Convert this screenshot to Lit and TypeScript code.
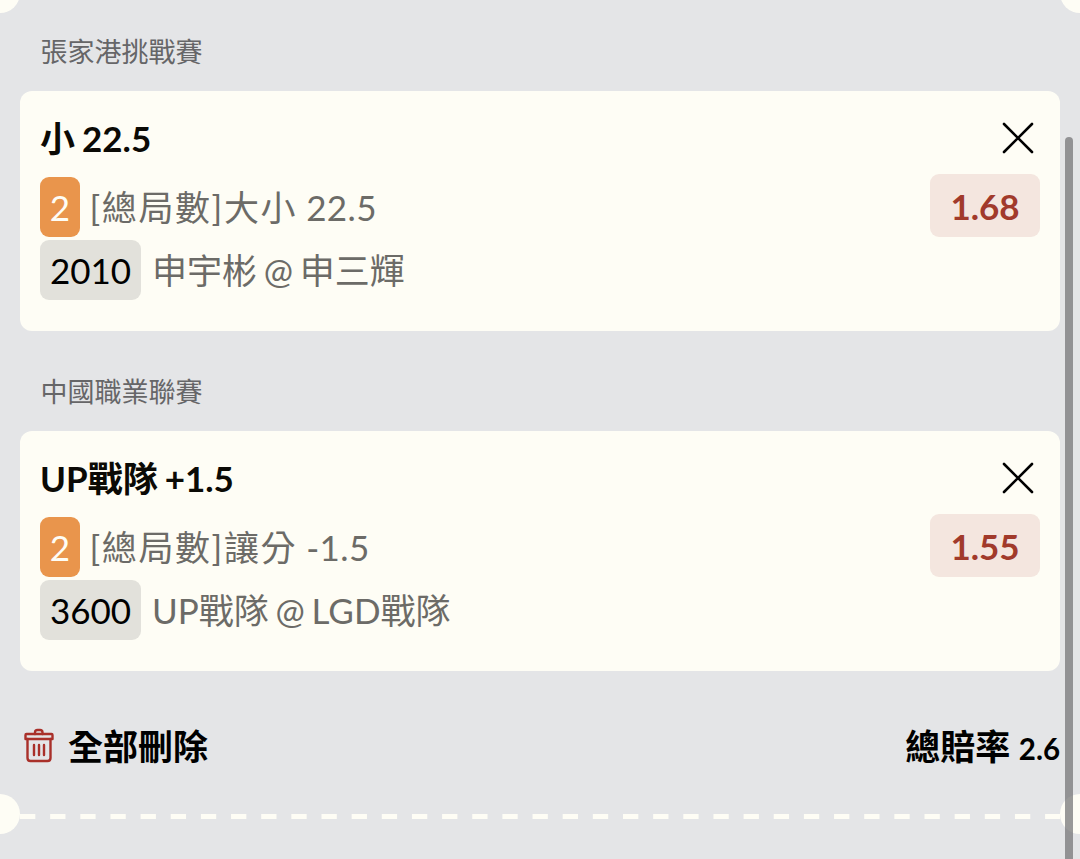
import { LitElement, html, svg, css } from 'lit';
import { customElement, property } from 'lit/decorators.js';

interface Bet {
  league: string;
  pick: string;
  count: number;
  market: string;
  line: string;
  code: string;
  match: string;
  odds: string;
}

const BETS: Bet[] = [
  {
    league: '張家港挑戰賽',
    pick: '小 22.5',
    count: 2,
    market: '[總局數]大小',
    line: '22.5',
    code: '2010',
    match: '申宇彬 @ 申三輝',
    odds: '1.68',
  },
  {
    league: '中國職業聯賽',
    pick: 'UP戰隊 +1.5',
    count: 2,
    market: '[總局數]讓分',
    line: '-1.5',
    code: '3600',
    match: 'UP戰隊 @ LGD戰隊',
    odds: '1.55',
  },
];

const closeIcon = svg`<path d="M3 3 31 31M31 3 3 31" fill="none" stroke="#000" stroke-width="2.6" stroke-linecap="round" />`;

const trashIcon = svg`
  <g fill="none" stroke="#a9302a" stroke-width="2.4" stroke-linejoin="round" stroke-linecap="round">
    <path d="M11 6V4.500Q11 2 13.500 2H16Q18.500 2 18.500 4.500V6" />
    <path d="M2.500 6H27.500Q28.500 6 28.500 7V11H1.500V7Q1.500 6 2.500 6Z" />
    <path d="M3.500 11V30Q3.500 33 6.500 33H23.500Q26.500 33 26.500 30V11" />
    <path d="M10 17V27M15 17V27M20 17V27" />
  </g>
`;

/** One selection: league name above a card with pick, market, match and odds. */
@customElement('bet-card')
export class BetCard extends LitElement {
  static styles = css`
    :host {
      display: block;
      height: 340px;
    }
    * {
      box-sizing: border-box;
    }
    .league {
      height: 91px;
      padding: 0 20.5px;
      line-height: 103px;
      font-size: 27px;
      color: #666668;
    }
    .card {
      display: flex;
      justify-content: space-between;
      height: 239.5px;
      padding: 18px 20px 0;
      border-radius: 12px;
      background: #fefdf5;
    }
    .info {
      display: flex;
      flex-direction: column;
    }
    .pick {
      height: 68.4px;
      line-height: 58px;
      font-weight: 700;
      word-spacing: -1.5px;
      color: #0b0a05;
    }
    .row {
      display: flex;
      align-items: center;
      height: 60px;
      margin-bottom: 3px;
      line-height: 60px;
      color: #6c6b67;
      white-space: pre;
    }
    .tag {
      height: 60px;
      margin-right: 11px;
      border-radius: 9px;
      text-align: center;
    }
    .count {
      width: 40px;
      margin-right: 9.5px;
      background: #e9954c;
      color: #fefdf5;
    }
    .code {
      width: 101px;
      background: #e2e1db;
      color: #000;
    }
    .market {
      margin-right: 9px;
      letter-spacing: 1.6px;
    }
    .line {
      letter-spacing: 0.4px;
    }
    .match {
      word-spacing: -2.2px;
    }
    .side {
      display: flex;
      flex-direction: column;
      align-items: flex-end;
    }
    .close {
      display: block;
      width: 34px;
      height: 34px;
      margin: 12px 5px 19px 0;
    }
    .odds {
      width: 110px;
      height: 63px;
      border-radius: 9px;
      background: #f4e6df;
      color: #a13a2b;
      font-weight: 700;
      line-height: 64px;
      text-align: center;
    }
  `;

  @property({ attribute: false }) bet!: Bet;

  render() {
    const { league, pick, count, market, line, code, match, odds } = this.bet;
    return html`
      <div class="league">${league}</div>
      <div class="card">
        <div class="info">
          <div class="pick">${pick}</div>
          <div class="row"><span class="tag count">${count}</span><span class="market">${market}</span><span class="line">${line}</span></div>
          <div class="row"><span class="tag code">${code}</span><span class="match">${match}</span></div>
        </div>
        <div class="side">
          <svg class="close" viewBox="0 0 34 34">${closeIcon}</svg>
          <div class="odds">${odds}</div>
        </div>
      </div>
    `;
  }
}

@customElement('app-root')
export class AppRoot extends LitElement {
  static styles = css`
    :host {
      display: block;
      position: relative;
      box-sizing: border-box;
      width: 1080px;
      height: 859px;
      padding: 0 20px;
      overflow: hidden;
      background: #e4e5e7;
      font-family: Lato, 'Noto Sans CJK TC', sans-serif;
      font-size: 35px;
      color: #000;
    }
    .footer {
      display: flex;
      align-items: center;
      height: 134px;
      font-weight: 700;
    }
    .trash {
      width: 30px;
      height: 35px;
      margin: 0 14px 3px 4px;
    }
    .clear {
      line-height: 60px;
      padding-bottom: 2px;
    }
    .total {
      margin-left: auto;
      line-height: 60px;
      padding-top: 1px;
    }
    .value {
      font-size: 29.5px;
    }
    .divider {
      display: block;
      width: 1040px;
      height: 5px;
    }
    /* ticket notches cut into both edges */
    .notch {
      position: absolute;
      width: 40px;
      height: 40px;
      border-radius: 50%;
      background: #fefdf5;
    }
    .left {
      left: -20px;
    }
    .right {
      right: -20px;
    }
    .top {
      top: -27px;
    }
    .bottom {
      top: 793.5px;
    }
    .scrollbar {
      position: absolute;
      top: 137px;
      right: 7px;
      bottom: -10px;
      width: 8px;
      border-radius: 4px;
      background: rgba(113, 113, 116, 0.72);
    }
  `;

  render() {
    return html`
      ${BETS.map((bet) => html`<bet-card .bet=${bet}></bet-card>`)}
      <div class="footer">
        <svg class="trash" viewBox="0 0 30 35">${trashIcon}</svg>
        <span class="clear">全部刪除</span>
        <span class="total">總賠率 <span class="value">2.6</span></span>
      </div>
      <svg class="divider" viewBox="0 0 1040 5">
        <path d="M0 2.500H1040" stroke="#fefdf5" stroke-width="5" stroke-dasharray="15.300 14.850" />
      </svg>
      <div class="notch left top"></div>
      <div class="notch right top"></div>
      <div class="notch left bottom"></div>
      <div class="notch right bottom"></div>
      <div class="scrollbar"></div>
    `;
  }
}
